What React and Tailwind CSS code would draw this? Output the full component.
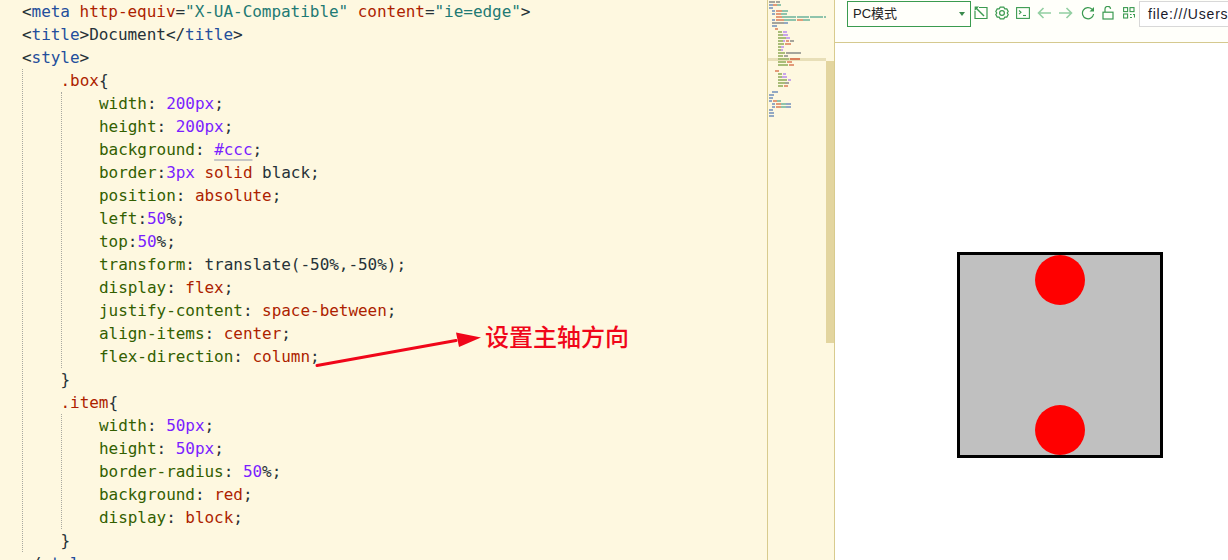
const C = {
  p: "text-[#263238]", // brackets and plain words
  t: "text-[#234e9c]", // tag names
  a: "text-[#ad1f00]", // attributes, values
  s: "text-[#1f7a74]", // strings
  k: "text-[#335f00]", // css properties
  n: "text-[#7a1fff]", // numbers
};

const Code = ({ parts }) => (
  <div className="h-[23px] whitespace-pre">
    {parts.map(([c, text], i) => (
      <span key={i} className={C[c]}>{text}</span>
    ))}
  </div>
);

const prop = (name, ...rest) => [["k", name], ...rest];

const boxProps = [
  prop("width", ["p", ": "], ["n", "200px"], ["p", ";"]),
  prop("height", ["p", ": "], ["n", "200px"], ["p", ";"]),
  "bg",
  prop("border", ["p", ":"], ["n", "3px"], ["p", " "], ["a", "solid"], ["p", " black;"]),
  prop("position", ["p", ": "], ["a", "absolute"], ["p", ";"]),
  prop("left", ["p", ":"], ["n", "50"], ["p", "%;"]),
  prop("top", ["p", ":"], ["n", "50"], ["p", "%;"]),
  prop("transform", ["p", ": translate(-50%,-50%);"]),
  prop("display", ["p", ": "], ["a", "flex"], ["p", ";"]),
  prop("justify-content", ["p", ": "], ["a", "space-between"], ["p", ";"]),
  prop("align-items", ["p", ": "], ["a", "center"], ["p", ";"]),
  prop("flex-direction", ["p", ": "], ["a", "column"], ["p", ";"]),
];

const itemProps = [
  prop("width", ["p", ": "], ["n", "50px"], ["p", ";"]),
  prop("height", ["p", ": "], ["n", "50px"], ["p", ";"]),
  prop("border-radius", ["p", ": "], ["n", "50"], ["p", "%;"]),
  prop("background", ["p", ": "], ["a", "red"], ["p", ";"]),
  prop("display", ["p", ": "], ["a", "block"], ["p", ";"]),
];

const Rule = ({ selector, rows }) => (
  <>
    <Code parts={[["a", selector], ["p", "{"]]} />
    <div className="border-l border-dotted border-[#a9a9a0] pl-[37.5px]">
      {rows.map((r, i) =>
        r === "bg" ? (
          <div key={i} className="h-[23px] whitespace-pre">
            <span className={C.k}>background</span>
            <span className={C.p}>: </span>
            <span className={`${C.n} underline decoration-2 decoration-[#c6c6c6] underline-offset-[4px]`}>#ccc</span>
            <span className={C.p}>;</span>
          </div>
        ) : (
          <Code key={i} parts={r} />
        )
      )}
    </div>
    <Code parts={[["p", "}"]]} />
  </>
);

const g = "bg-[#a9bd78]";
const v = "bg-[#c9a5ea]";
const o = "bg-[#e39a78]";
const b = "bg-[#93a9c4]";
const e = "bg-[#8fc4ac]";
const h = "bg-[#a5a59c]";

// each row: [start px, end px, colour], measured off the minimap
const miniRows = [
  [[3, 9, h], [10, 14, h]],
  [[3, 7, b], [7, 11, o], [11, 15, e]],
  [[3, 7, b]],
  [[6, 9, b], [10, 16, o], [16, 22, e]],
  [[6, 9, b], [10, 15, o], [15, 21, e]],
  [[10, 16, o], [16, 30, e], [31, 43, e], [44, 57, e], [58, 60, e]],
  [[6, 9, b], [10, 18, o], [18, 30, e], [31, 37, o], [37, 44, e]],
  [[6, 18, h], [18, 22, b]],
  [[6, 11, b]],
  [[9, 12, o]],
  [[12, 16, g], [17, 21, v]],
  [[12, 17, g], [17, 22, v]],
  [[12, 20, g], [20, 24, v]],
  [[12, 17, g], [17, 19, v], [20, 23, o], [24, 28, h]],
  [[12, 18, g], [19, 25, o]],
  [[12, 15, g], [15, 18, v]],
  [[12, 15, g], [15, 17, v]],
  [[12, 19, g], [20, 35, h]],
  [[12, 17, g], [18, 22, h]],
  [[12, 23, g], [24, 34, "bg-[#d9805c]"]],
  [[12, 20, g], [21, 26, o]],
  [[12, 22, g], [23, 28, o]],
  [],
  [[9, 13, o]],
  [[12, 16, g], [17, 20, v]],
  [[12, 16, g], [16, 21, v]],
  [[12, 21, g], [22, 25, v]],
  [[12, 19, g], [19, 23, h]],
  [[12, 17, g], [18, 22, o]],
  [],
  [[6, 12, b]],
  [[3, 8, b]],
  [[3, 7, b]],
  [[3, 6, b], [7, 11, o], [11, 15, e]],
  [[6, 9, b], [10, 15, o], [15, 20, e], [20, 25, b]],
  [[6, 9, b], [10, 15, o], [15, 20, e], [20, 25, b]],
  [[3, 7, b]],
  [[3, 8, b]],
  [[3, 8, b]],
];

const Minimap = () => (
  <div className="w-[68px] shrink-0 border-x border-[#d8cb8e] bg-[#fef8e0] flex">
    <div className="flex-1 min-w-0 pt-[1px]">
      {miniRows.map((row, i) => (
        <div key={i} className={`h-[3px] flex ${i === 19 ? "bg-[#e8dfb8]" : ""}`}>
          {row.map(([from, to, color], j) => (
            <div
              key={j}
              className={`h-[2px] ${color}`}
              style={{ marginLeft: from - (j ? row[j - 1][1] : 2), width: to - from }}
            />
          ))}
        </div>
      ))}
    </div>
    <div className="w-[8px] shrink-0 pt-[61px] pb-[217px] flex">
      <div className="w-full bg-[#e3d59f]" />
    </div>
  </div>
);

const stroke = "#3b9a50";
const light = "#93cfa2";

const Icons = () => (
  <div className="flex items-center gap-[7px] ml-[3px] mt-[-2px]">
    <svg width="14" height="14" viewBox="0 0 14 14" fill="none" stroke={stroke} strokeWidth="1.2">
      <path d="M5 1.5h8v11H1V5" />
      <path d="M2 2l8 8" strokeWidth="1.4" />
      <path d="M0.6 0.6h4.4L0.6 5z" fill={stroke} stroke="none" />
    </svg>
    <svg width="14" height="14" viewBox="0 0 14 14" fill="none" stroke={stroke} strokeWidth="1.2">
      <path d="M5.2 1.2h3.6l1 1.6 2 .1 1.4 2.6-1 1.5 1 1.5-1.4 2.6-2 .1-1 1.6H5.2l-1-1.6-2-.1L.8 8.5l1-1.5-1-1.5 1.4-2.6 2-.1z" />
      <circle cx="7" cy="7" r="2.4" />
    </svg>
    <svg width="14" height="14" viewBox="0 0 14 14" fill="none" stroke={stroke} strokeWidth="1.1">
      <rect x="0.6" y="1.6" width="12.8" height="10.8" />
      <path d="M3 4.5l2 1.8-2 1.8" />
      <path d="M7 9.5h3" />
    </svg>
    <svg width="14" height="14" viewBox="0 0 14 14" fill="none" stroke={light} strokeWidth="1.6">
      <path d="M14 7H1.5M6.5 2L1.5 7l5 5" />
    </svg>
    <svg width="14" height="14" viewBox="0 0 14 14" fill="none" stroke={light} strokeWidth="1.6" className="ml-[1px]">
      <path d="M0 7h12.5M7.5 2l5 5-5 5" />
    </svg>
    <svg width="14" height="14" viewBox="0 0 14 14" fill="none" stroke={stroke} strokeWidth="1.2" className="ml-[1px]">
      <path d="M11 3.2A5.6 5.6 0 1 0 12.6 8" />
      <path d="M13 1v4.5H8.5z" fill={stroke} stroke="none" />
    </svg>
    <svg width="12" height="14" viewBox="0 0 12 14" fill="none" stroke={stroke} strokeWidth="1.2">
      <rect x="1" y="6.2" width="10" height="6.8" />
      <path d="M3 6V3.5a2.8 2.8 0 0 1 5.6-.6" />
    </svg>
    <svg width="12" height="14" viewBox="0 0 12 14" fill="none" stroke={stroke} strokeWidth="1.1" className="ml-[2px]">
      <rect x="0.6" y="1.6" width="4" height="4" />
      <rect x="7" y="1.6" width="4" height="4" />
      <rect x="0.6" y="8" width="4" height="4" />
      <path d="M7 8.5h1.5M10 8.5h1.5v3M7 11.5h2" />
    </svg>
  </div>
);

const Toolbar = () => (
  <div className="h-[43px] shrink-0 border-b border-[#d5c98f] bg-[#fffffa] flex items-start pt-[1px] pl-[12px] font-['Liberation_Sans','Noto_Sans_CJK_SC',sans-serif] text-[13px] text-[#222]">
    <div className="w-[124px] h-[26px] shrink-0 border border-[#3a9b4f] pl-[5px] pr-[5px] flex items-center justify-between">
      <span>PC模式</span>
      <span className="w-0 h-0 border-x-[3px] border-t-[4px] border-x-transparent border-t-[#3a8a4c]" />
    </div>
    <div className="h-[26px] flex items-center">
      <Icons />
    </div>
    <div className="ml-[4px] w-[120px] h-[26px] shrink-0 border border-[#d8d8d8] bg-white pl-[8px] flex items-center whitespace-pre text-[14px] tracking-[0.8px] text-[#1a1a2a]">
      file:///Users
    </div>
  </div>
);

const Preview = () => (
  <div className="flex-1 bg-white pt-[209px] pl-[122px]">
    <div className="w-[206px] h-[206px] border-[3px] border-black bg-[#c0c0c0] flex flex-col justify-between items-center">
      <div className="w-[50px] h-[50px] rounded-full bg-[#ff0000]" />
      <div className="w-[50px] h-[50px] rounded-full bg-[#ff0000]" />
    </div>
  </div>
);

export default function App() {
  return (
    <div className="w-[1228px] h-[560px] overflow-hidden flex">
      <div className="relative w-[767px] shrink-0 bg-[#fef8e0] pl-[22px] font-['DejaVu_Sans_Mono',monospace] text-[16px] leading-[23px] tracking-[-0.04px]">
        <Code
          parts={[
            ["p", "<"], ["t", "meta"], ["p", " "], ["a", "http-equiv"], ["p", "="], ["s", '"X-UA-Compatible"'],
            ["p", " "], ["a", "content"], ["p", "="], ["s", '"ie=edge"'], ["p", ">"],
          ]}
        />
        <Code parts={[["p", "<"], ["t", "title"], ["p", ">Document</"], ["t", "title"], ["p", ">"]]} />
        <Code parts={[["p", "<"], ["t", "style"], ["p", ">"]]} />
        <div className="border-l border-dotted border-[#a9a9a0] pl-[37.5px]">
          <Rule selector=".box" rows={boxProps} />
          <Rule selector=".item" rows={itemProps} />
        </div>
        <Code parts={[["p", "</"], ["t", "style"], ["p", ">"]]} />

        {/* annotation drawn on top of the code */}
        <svg className="absolute left-[310px] top-[325px]" width="175" height="45" viewBox="0 0 175 45">
          <path d="M7 40.5L146 15.5" stroke="#f0061a" strokeWidth="3" strokeLinecap="round" />
          <path d="M171 12.5L146 7.5 149 22z" fill="#f0061a" />
        </svg>
        <div className="absolute left-[485px] top-[320px] text-[24px] leading-[32px] tracking-normal whitespace-nowrap text-[#f0061a] font-medium font-['Noto_Sans_CJK_SC',sans-serif]">
          设置主轴方向
        </div>
      </div>
      <Minimap />
      <div className="flex-1 min-w-0 flex flex-col overflow-hidden">
        <Toolbar />
        <Preview />
      </div>
    </div>
  );
}
